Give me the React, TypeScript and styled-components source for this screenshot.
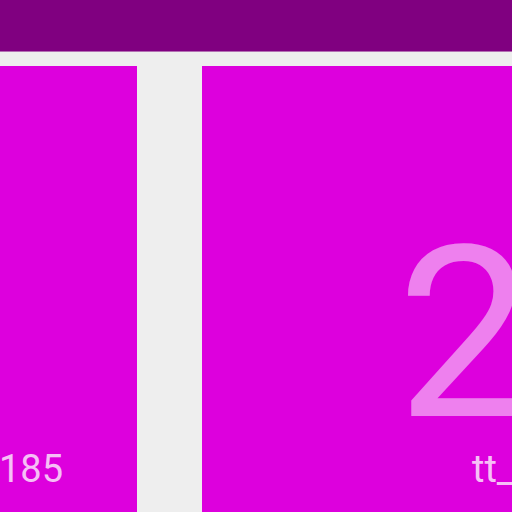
import React from 'react';
import styled, { createGlobalStyle } from 'styled-components';

const GlobalStyle = createGlobalStyle`
  html, body {
    margin: 0;
    padding: 0;
    background: #eeeeee;
    overflow: hidden;
    font-family: Roboto, 'Liberation Sans', sans-serif;
  }
`;

const TopBar = styled.header`
  height: 52px;
  background: #800080;
  border-bottom: 1px solid #b36fb3;
  box-sizing: border-box;
`;

const Strip = styled.div`
  display: flex;
  gap: 65px;
  padding-top: 14px;
  margin-left: -313px;
`;

const Card = styled.div`
  flex: 0 0 450px;
  height: 460px;
  box-sizing: border-box;
  background: #dd00dd;
  display: flex;
  flex-direction: column;
  padding: 168px 0 0 195px;
`;

const BigNumber = styled.div`
  font-size: 240px;
  line-height: 200px;
  font-weight: 400;
  color: rgba(255, 255, 255, 0.5);
  white-space: nowrap;
`;

const Label = styled.div`
  margin: 16px 0 0 75px;
  font-size: 38px;
  line-height: 38px;
  color: rgba(255, 255, 255, 0.75);
  white-space: nowrap;
`;

const items = [
  { n: 1, id: 'tt_185' },
  { n: 2, id: 'tt_186' },
];

const App: React.FC = () => {
  return (
    <>
      <GlobalStyle />
      <TopBar />
      <Strip>
        {items.map((it) => (
          <Card key={it.id}>
            <BigNumber>{it.n}</BigNumber>
            <Label>{it.id}</Label>
          </Card>
        ))}
      </Strip>
    </>
  );
};

export default App;
